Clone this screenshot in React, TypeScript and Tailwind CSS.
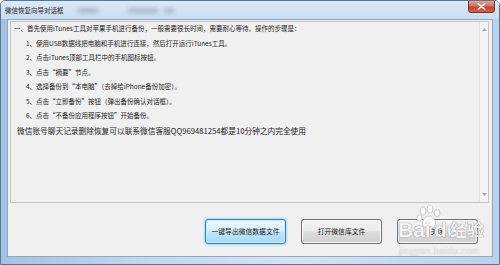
import React from "react";

const font = "font-['Noto_Sans_CJK_SC','Noto_Sans',sans-serif]";

function Btn({ label, focused }: { label: string; focused?: boolean }) {
  return (
    <div
      className={
        "w-[81px] h-[25px] rounded-[3px] border flex items-center justify-center text-[6.8px] text-[#1a1a1a] " +
        (focused
          ? "border-[#3c7fb1] bg-[linear-gradient(#eaf6fd_0%,#d9f0fc_48%,#bee6fd_52%,#a7d9f5_100%)] shadow-[0_0_2px_1px_#9fdcf7,inset_0_0_0_1px_#c9ecfb]"
          : "border-[#707070] bg-[linear-gradient(#f2f2f2_0%,#ebebeb_48%,#dddddd_52%,#cfcfcf_100%)] shadow-[inset_0_0_0_1px_#fbfbfb]")
      }
    >
      {label}
    </div>
  );
}

export default function App() {
  const steps = [
    "1、使用USB数据线把电脑和手机进行连接，然后打开运行iTunes工具。",
    "2、点击iTunes顶部工具栏中的手机图标按钮。",
    "3、点击“摘要”节点。",
    "4、选择备份到“本电脑”（去掉给iPhone备份加密）。",
    "5、点击“立即备份”按钮（弹出备份确认对话框）。",
    "6、点击“不备份应用程序按钮”开始备份。",
  ];
  return (
    <div
      className={
        "w-[500px] h-[265px] relative overflow-hidden flex flex-col bg-[linear-gradient(90deg,#a3c2e2,#c3d8ee_30%,#d3e3f3_60%,#b9d1ea)] border border-[#5a7596] rounded-t-[5px] " +
        font
      }
    >
      {/* title bar */}
      <div className="h-[18px] relative flex items-center pl-[4px] bg-[linear-gradient(#dce9f7,#c9dcf0)]">
        <span className="text-[6.5px] text-[#1e1e1e] leading-none">微信恢复向导对话框</span>
        <div className="absolute left-[77px] top-[7px] w-[20px] h-[5px] bg-[#6d7f92] opacity-40 blur-[2px]" />
        <div className="absolute left-[127px] top-[7px] w-[30px] h-[5px] bg-[#6d7f92] opacity-40 blur-[2px]" />
        <div className="absolute left-[163px] top-[7px] w-[10px] h-[5px] bg-[#6d7f92] opacity-40 blur-[2px]" />
        <div className="absolute right-[4px] top-[-1px] w-[27px] h-[13px] rounded-b-[3px] border border-[#7a3125] bg-[linear-gradient(#e8a493,#d8705a_45%,#c7422a_55%,#d2644c)] flex items-center justify-center">
          <svg width="9" height="7" viewBox="0 0 9 7">
            <path d="M1.5 1 L7.5 6 M7.5 1 L1.5 6" stroke="#fff" strokeWidth="1.6" strokeLinecap="round" />
          </svg>
        </div>
      </div>

      {/* client area frame */}
      <div className="flex-1 flex px-[6px] pb-[7px]">
        <div className="flex-1 bg-[#f0f0f0] border border-[#8ea9c6] flex flex-col">
          {/* text box */}
          <div className="mt-[1px] ml-[2px] mr-[3px] h-[182px] border border-[#c5c5c5] bg-[#f0f0f0] flex">
            <div className="flex-1 flex flex-col text-[#1c1c1c] pt-[0px]">
              <div className="h-[14.5px] flex items-center pl-[3px] text-[6.5px] whitespace-nowrap">
                一、首先使用iTunes工具对苹果手机进行备份，一般需要很长时间，需要耐心等待。操作的步骤是：
              </div>
              {steps.map((s) => (
                <div key={s} className="h-[14.5px] flex items-center pl-[15px] text-[6.5px] whitespace-nowrap">
                  {s}
                </div>
              ))}
              <div className="h-[14.5px] flex items-center pl-[6px] text-[7.7px] whitespace-nowrap">
                微信账号聊天记录删除恢复可以联系微信客服QQ969481254都是10分钟之内完全使用
              </div>
            </div>
            {/* scrollbar */}
            <div className="w-[9px] bg-[#f4f4f4] border-l border-[#e3e3e3] flex flex-col justify-between items-center py-[6px]">
              <svg width="5" height="3" viewBox="0 0 5 3">
                <path d="M0 3 L2.5 0 L5 3 Z" fill="#a8a8a8" />
              </svg>
              <svg width="5" height="3" viewBox="0 0 5 3">
                <path d="M0 0 L2.5 3 L5 0 Z" fill="#a8a8a8" />
              </svg>
            </div>
          </div>

          {/* buttons */}
          <div className="flex-1 flex items-center justify-end gap-[15px] pr-[14px] pt-[4px]">
            <Btn label="一键导出微信数据文件" focused />
            <Btn label="打开微信库文件" />
            <Btn label="关闭" />
          </div>
        </div>
      </div>

      {/* Baidu watermark overlay */}
      <div className="absolute left-[397px] top-[204px] w-[90px] h-[56px] pointer-events-none select-none font-['Liberation_Sans',sans-serif]">
        <svg className="absolute left-[18px] top-[0px]" width="26" height="24" viewBox="0 0 26 24">
          <g fill="#ffffff" stroke="#b8b8b8" strokeWidth="0.8" opacity="0.9">
            <ellipse cx="7" cy="6" rx="3" ry="4" />
            <ellipse cx="14" cy="4" rx="3" ry="4" />
            <ellipse cx="21" cy="8" rx="3" ry="3.6" />
            <ellipse cx="3.5" cy="13" rx="2.6" ry="3.2" />
            <path d="M13 11 C8 11 5 18 7 21 C9 23 12 21.5 13 21.5 C14 21.5 17 23 19 21 C21 18 18 11 13 11 Z" />
          </g>
        </svg>
        <div className="absolute left-[0px] top-[14px] text-[21px] font-bold leading-none text-white/90 [text-shadow:0_0_1px_#8a8a8a,0_0_1px_#8a8a8a]">
          Bai
        </div>
        <div className="absolute left-[36px] top-[14px] text-[21px] font-bold leading-none text-white/90 [text-shadow:0_0_1px_#8a8a8a,0_0_1px_#8a8a8a]">
          du
        </div>
        <div className="absolute left-[52px] top-[15px] text-[17px] font-bold leading-none text-white/90 font-['Noto_Sans_CJK_SC',sans-serif] [text-shadow:0_0_1px_#8a8a8a,0_0_1px_#8a8a8a]">
          经验
        </div>
        <div className="absolute left-[1px] top-[42px] text-[9px] leading-none text-white/80 tracking-[0.5px] [text-shadow:0_0_1px_#a0a0a0]">
          jingyan.baidu.com
        </div>
      </div>
    </div>
  );
}
